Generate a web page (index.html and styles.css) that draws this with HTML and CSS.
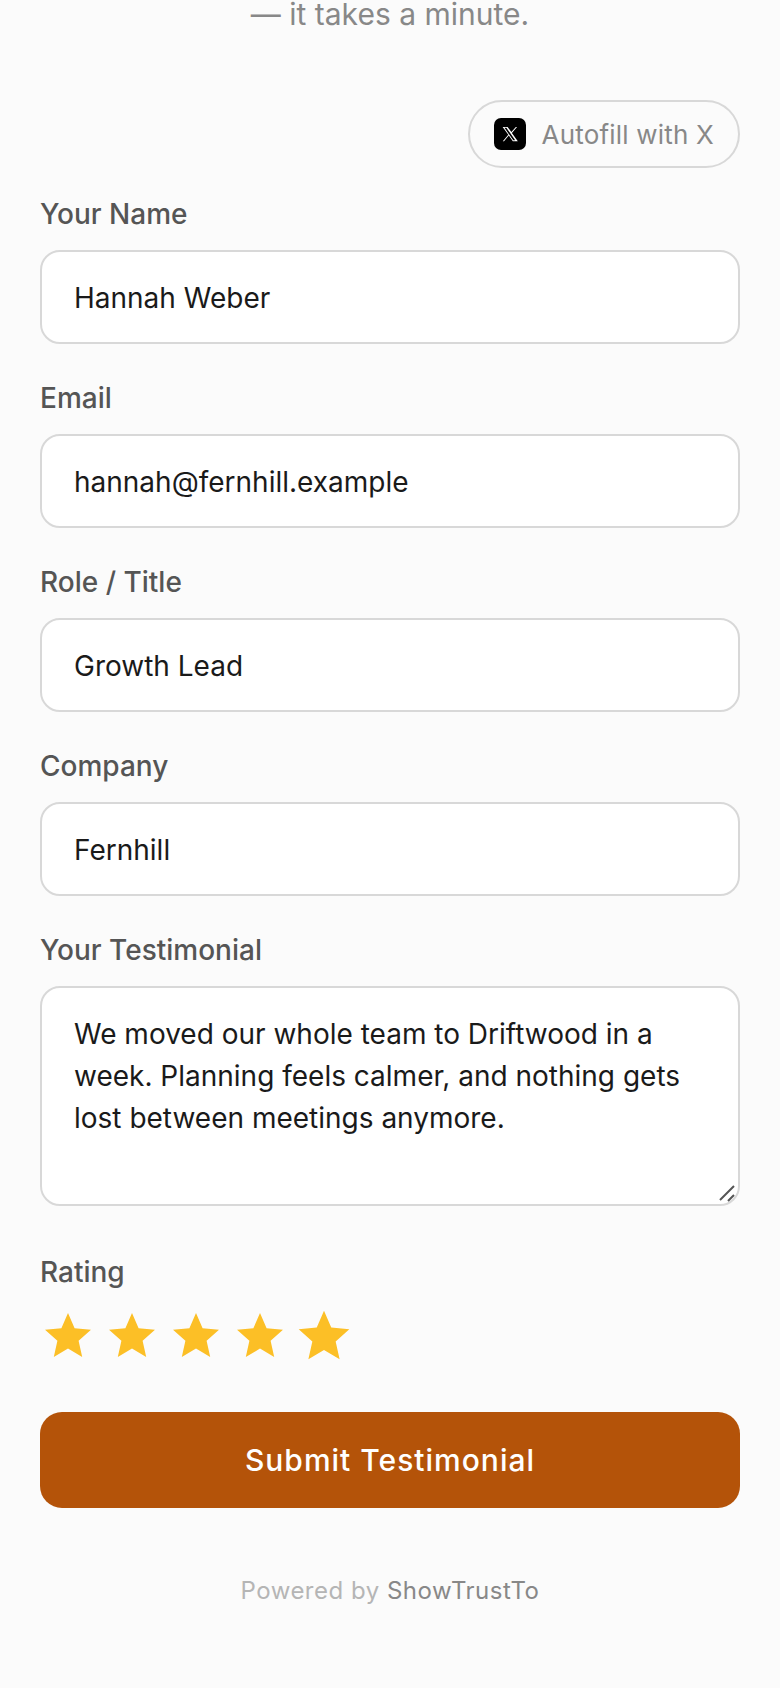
FILE: index.html
```html
<!DOCTYPE html>
<html lang="en">
  <head>
    <meta charset="UTF-8" />
    <meta name="viewport" content="width=device-width, initial-scale=1.0" />
    <title>Leave a testimonial</title>
    <link rel="stylesheet" href="styles.css">
  </head>
  <body>
    <div class="page">
      <p class="intro">— it takes a minute.</p>
      <div class="autofill-row">
        <button class="autofill" type="button">
          <span class="x-badge">
            <svg viewBox="0 0 24 24" width="18" height="18" aria-hidden="true">
              <path fill="#fff" fill-rule="evenodd" d="M2.2 2.5h6.6l5 6.9 6-6.9h1.6l-6.9 8 7.9 11h-6.6l-5.400-7.400-6.400 7.400H2.400l7.300-8.500zm2.400 1.200l11.700 16.600h2.600L7.200 3.700z"/>
            </svg>
          </span>
          Autofill with X
        </button>
      </div>
      <form class="form">
        <div class="field">
          <label for="name">Your Name</label>
          <input id="name" type="text" value="Hannah Weber" />
        </div>
        <div class="field">
          <label for="email">Email</label>
          <input id="email" type="text" value="hannah@fernhill.example" />
        </div>
        <div class="field">
          <label for="role">Role / Title</label>
          <input id="role" type="text" value="Growth Lead" />
        </div>
        <div class="field">
          <label for="company">Company</label>
          <input id="company" type="text" value="Fernhill" />
        </div>
        <div class="field testimonial">
          <label for="testimonial">Your Testimonial</label>
          <div class="textarea-wrap">
            <textarea id="testimonial">We moved our whole team to Driftwood in a week. Planning feels calmer, and nothing gets lost between meetings anymore.</textarea>
            <svg class="grip" viewBox="0 0 20 20" aria-hidden="true">
              <path d="M2 16L16 2M10 17l6-6" />
            </svg>
          </div>
        </div>
        <div class="field rating">
          <label>Rating</label>
          <div class="stars">
            <svg class="star" viewBox="0 0 24 24"><path d="M12 1l3.300 7.600 8.200.8-6.200 5.500 1.800 8.100L12 18.800 4.900 23l1.800-8.100L.5 9.400l8.200-.8z"/></svg>
            <svg class="star" viewBox="0 0 24 24"><path d="M12 1l3.300 7.600 8.200.8-6.200 5.500 1.800 8.100L12 18.800 4.900 23l1.800-8.100L.5 9.400l8.200-.8z"/></svg>
            <svg class="star" viewBox="0 0 24 24"><path d="M12 1l3.300 7.600 8.200.8-6.200 5.500 1.800 8.100L12 18.800 4.900 23l1.800-8.100L.5 9.400l8.200-.8z"/></svg>
            <svg class="star" viewBox="0 0 24 24"><path d="M12 1l3.300 7.600 8.200.8-6.200 5.500 1.800 8.100L12 18.800 4.900 23l1.800-8.100L.5 9.400l8.200-.8z"/></svg>
            <svg class="star hovered" viewBox="0 0 24 24"><path d="M12 1l3.300 7.600 8.200.8-6.200 5.500 1.800 8.100L12 18.800 4.900 23l1.800-8.100L.5 9.400l8.200-.8z"/></svg>
          </div>
        </div>
        <button class="submit" type="button">Submit Testimonial</button>
      </form>
      <p class="powered">Powered by <span>ShowTrustTo</span></p>
    </div>
  </body>
</html>
```
FILE: styles.css
```css
body {
  margin: 0;
  background-color: #fbfbfb;
  font-family: Inter, 'Liberation Sans', sans-serif;
  overflow: hidden;
}

.page {
  padding: 0 40px;
  margin-top: -10px;
}

.intro {
  margin: 0;
  text-align: center;
  font-size: 30px;
  line-height: 48px;
  color: #888;
}

.autofill-row {
  display: flex;
  justify-content: flex-end;
  margin-top: 62px;
  margin-bottom: 28px;
}

.autofill {
  display: flex;
  align-items: center;
  gap: 16px;
  height: 68px;
  padding: 0 24px;
  font-family: inherit;
  font-size: 26px;
  letter-spacing: 0.2px;
  color: #888;
  background: transparent;
  border: 2px solid #d8d8d8;
  border-radius: 34px;
}

.x-badge {
  display: flex;
  align-items: center;
  justify-content: center;
  width: 32px;
  height: 32px;
  background-color: #000;
  border-radius: 7px;
}

.field {
  margin-bottom: 36px;
}

.field label {
  display: block;
  font-size: 28px;
  line-height: 36px;
  font-weight: 500;
  color: #555;
  margin-bottom: 18px;
}

input[type='text'],
textarea {
  display: block;
  width: 100%;
  box-sizing: border-box;
  font-family: inherit;
  font-size: 28px;
  color: #1a1a1a;
  background-color: #fff;
  border: 2px solid #d8d8d8;
  border-radius: 20px;
  padding: 2px 32px 0;
  outline: none;
}

input[type='text'] {
  height: 94px;
}

textarea {
  height: 220px;
  padding: 25px 32px;
  line-height: 42px;
  resize: none;
}

.textarea-wrap {
  position: relative;
}

.grip {
  position: absolute;
  right: 2px;
  bottom: 2px;
  width: 20px;
  height: 20px;
  fill: none;
  stroke: #555;
  stroke-width: 2;
  pointer-events: none;
}

.testimonial {
  margin-bottom: 48px;
}

.rating {
  margin-bottom: 53px;
}

.rating label {
  margin-bottom: 21px;
}

.stars {
  display: flex;
  align-items: center;
  gap: 16px;
  padding-left: 4px;
}

.star {
  width: 48px;
  height: 48px;
  fill: #fcbf26;
}

.star.hovered {
  transform: scale(1.1);
}

.submit {
  display: block;
  width: 100%;
  height: 96px;
  font-family: inherit;
  font-size: 30px;
  font-weight: 500;
  letter-spacing: 1px;
  color: #fff;
  background-color: #b45309;
  border: none;
  border-radius: 22px;
}

.powered {
  margin: 67px 0 0;
  text-align: center;
  font-size: 24px;
  line-height: 32px;
  letter-spacing: 0.5px;
  color: #b5b5b5;
}

.powered span {
  color: #888;
}
```
